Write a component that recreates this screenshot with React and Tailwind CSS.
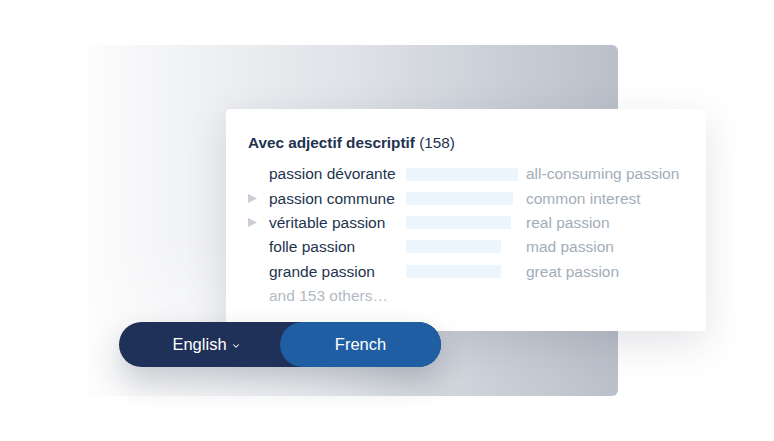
import { ChevronDown } from 'lucide-react';

const rows = [
  { fr: 'passion dévorante', en: 'all-consuming passion', bar: 112, arrow: false },
  { fr: 'passion commune', en: 'common interest', bar: 107, arrow: true },
  { fr: 'véritable passion', en: 'real passion', bar: 105, arrow: true },
  { fr: 'folle passion', en: 'mad passion', bar: 95, arrow: false },
  { fr: 'grande passion', en: 'great passion', bar: 95, arrow: false },
];

function Row({ row }) {
  return (
    <div className="flex items-center h-[24.3px]">
      <div className="w-[21px] flex items-center">
        {row.arrow ? (
          <svg width="9" height="9" viewBox="0 0 9 9">
            <path d="M0 0 L9 4.5 L0 9 Z" fill="#c9ced5" />
          </svg>
        ) : null}
      </div>
      <div className="w-[137px] text-[#1e3350]">{row.fr}</div>
      <div className="w-[120px]">
        <div className="h-[13px] bg-[#eef6fd]" style={{ width: row.bar }} />
      </div>
      <div className="text-[#a3adb8]">{row.en}</div>
    </div>
  );
}

export default function App() {
  return (
    <div
      className="relative w-[774px] h-[441px] bg-white overflow-hidden"
      style={{ fontFamily: '"Liberation Sans", Arial, sans-serif' }}
    >
      <div className="absolute left-[88px] top-[45px] w-[530px] h-[351px] rounded-md bg-gradient-to-r from-[#fcfcfd] via-[#dfe2e7] to-[#bac0ca]" />
      <div className="absolute left-[40px] top-[280px] w-[320px] h-[140px] rounded-full bg-white/40 blur-2xl" />

      <div className="absolute left-[226px] top-[109px] w-[480px] h-[222px] rounded bg-white shadow-[0_12px_40px_rgba(30,40,60,0.13)] pl-[22px] pt-[23px]">
        <div className="text-[15.3px] text-[#1e3350] mb-[7px]">
          <span className="font-bold">Avec adjectif descriptif</span> (158)
        </div>
        <div className="text-[15.5px]">
          {rows.map(r => (
            <Row key={r.fr} row={r} />
          ))}
          <div className="flex items-center h-[24.3px]">
            <div className="w-[21px]" />
            <div className="text-[#b3bac3]">and 153 others…</div>
          </div>
        </div>
      </div>

      <div className="absolute left-[119px] top-[322px] w-[322px] h-[45px] rounded-full bg-[#1f3158] flex shadow-[0_14px_30px_rgba(20,30,50,0.22)]">
        <div className="w-[161px] flex items-center justify-center gap-[4px] pl-[14px] text-white text-[16.5px]">
          English
          <ChevronDown size={10} strokeWidth={2.5} className="mt-[2px]" />
        </div>
        <div className="w-[161px] rounded-full bg-[#1f5ea3] flex items-center justify-center text-white text-[16.5px]">
          French
        </div>
      </div>
    </div>
  );
}
